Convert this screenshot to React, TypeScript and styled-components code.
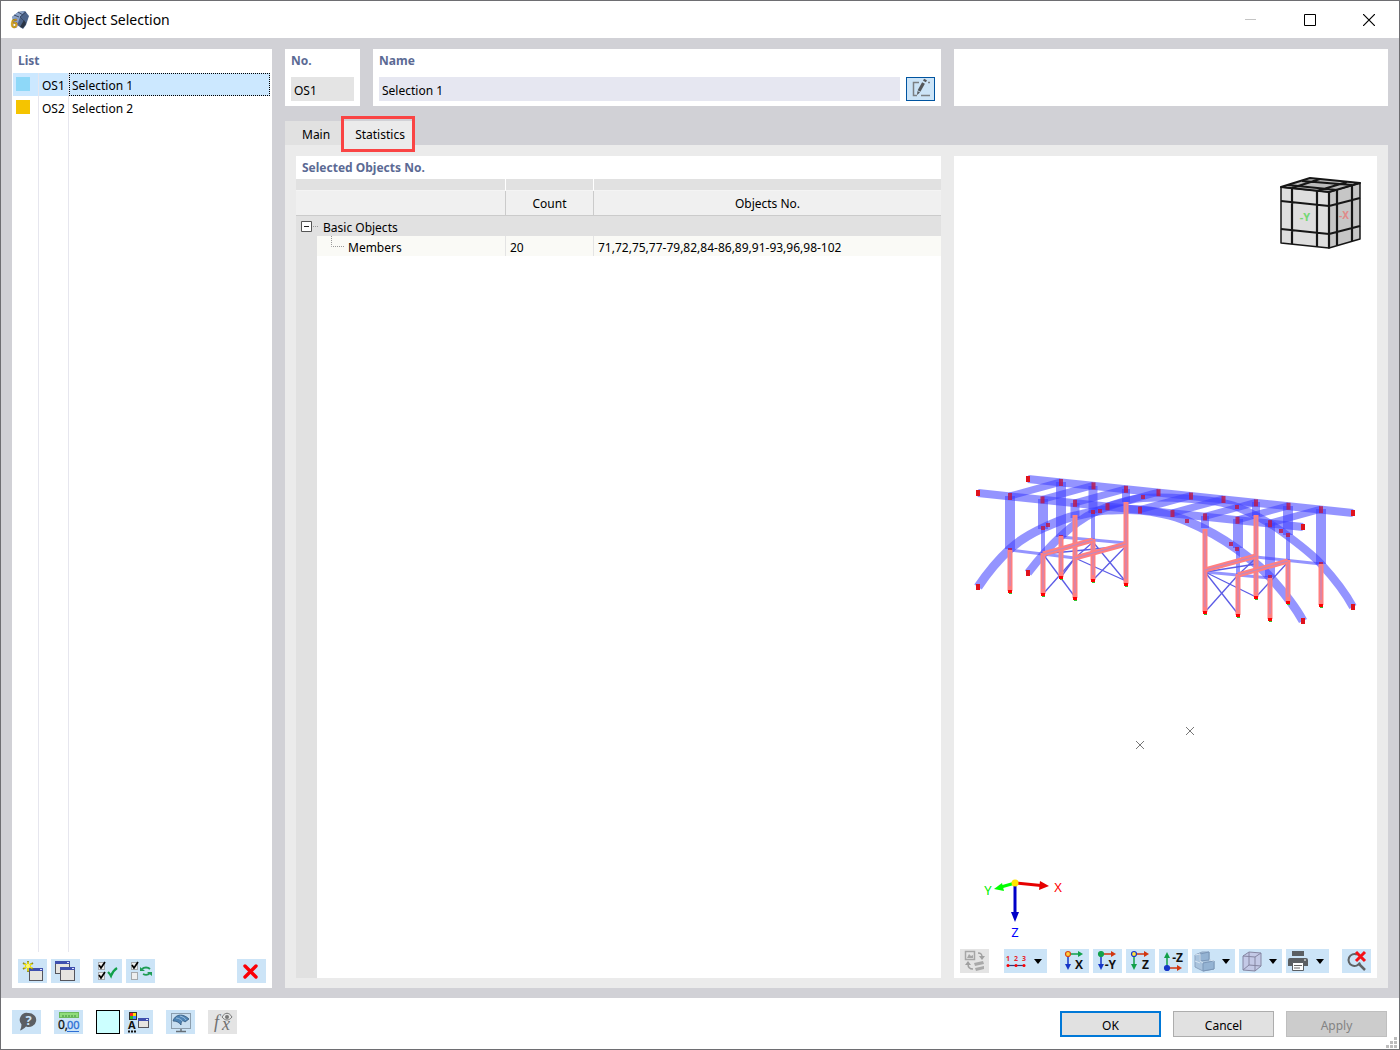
import React from "react";
import styled, { createGlobalStyle, css } from "styled-components";

const font = `"Noto Sans", "Open Sans", sans-serif`;

const GlobalStyle = createGlobalStyle`
  *, *::before, *::after { box-sizing: border-box; }
  body { margin: 0; font: 12px/16px ${font}; color: #000; background: #fff; }
  button, input { font: inherit; color: inherit; }
  button { padding: 0; border: 0; }
`;

/* ---------- window ---------- */

const Window = styled.div`
  display: flex;
  flex-direction: column;
  min-height: 100vh;
  border: 1px solid #6e6e72;
  background: #fff;
`;

const TitleBar = styled.header`
  display: flex;
  align-items: center;
  height: 37px;
  padding: 0 1px 0 8px;
`;

const WindowTitle = styled.h1`
  flex: 1;
  margin: 0 0 0 6px;
  font-size: 14px;
  line-height: 20px;
  font-weight: 400;
`;

const CaptionButton = styled.button`
  display: grid;
  place-items: center;
  width: 59px;
  height: 36px;
  background: transparent;
`;

const Body = styled.main`
  flex: 1;
  display: flex;
  gap: 13px;
  padding: 11px 11px 10px;
  background: #d1d1d6;
`;

const Footer = styled.footer`
  display: flex;
  align-items: flex-start;
  justify-content: space-between;
  height: 51px;
  padding: 12px 12px 0 11px;
  position: relative;
`;

const Grip = styled.svg`
  position: absolute;
  right: 2px;
  bottom: 1px;
`;

/* ---------- shared parts ---------- */

const Panel = styled.section`
  display: flex;
  flex-direction: column;
  background: #fff;
`;

const PanelTitle = styled.h2<{ $tight?: boolean }>`
  margin: 0;
  padding: 4px 6px ${(p) => (p.$tight ? 3 : 4)}px;
  font-size: 12px;
  line-height: 16px;
  font-weight: 700;
  color: #5b6a94;
`;

const Bar = styled.div<{ $gap?: number }>`
  display: flex;
  gap: ${(p) => p.$gap ?? 4}px;
`;

const Space = styled.span<{ $w?: number }>`
  ${(p) => (p.$w ? css`width: ${p.$w}px;` : css`flex: 1;`)}
`;

const IconButton = styled.button<{ $menu?: boolean; $framed?: boolean }>`
  display: flex;
  align-items: center;
  justify-content: center;
  width: ${(p) => (p.$menu ? 43 : 29)}px;
  height: 24px;
  background: #cce4f7;
  ${(p) => p.$framed && css`border: 1px solid #0054a0;`}
  &:disabled { background: #e4e4e4; }
`;

const ColorButton = styled.button`
  width: 24px;
  height: 24px;
  border: 1px solid #000;
  background: #ccffff;
`;

const PushButton = styled.button<{ $primary?: boolean }>`
  width: 101px;
  height: 26px;
  margin-top: 1px;
  padding-top: 3px;
  background: #e1e1e1;
  border: ${(p) => (p.$primary ? "2px solid #0078d7" : "1px solid #adadad")};
  &:disabled { background: #cccccc; border-color: #bfbfbf; color: #838383; }
`;

/* ---------- list ---------- */

const ListPanel = styled(Panel)`
  width: 260px;
  flex: none;
`;

const ListTable = styled.table`
  width: 257px;
  margin-left: 1px;
  border-collapse: separate;
  border-spacing: 0;
  table-layout: fixed;
`;

const ListRow = styled.tr<{ $selected?: boolean }>`
  height: 23px;
  td { padding: 3px 0 0 3px; background: ${(p) => (p.$selected ? "#cce8ff" : "#fff")}; }
  td:nth-child(1), td:nth-child(2) { border-right: 1px solid #e6e6ee; }
  td:nth-child(1) { padding-top: 1px; }
  td:nth-child(3) { border: 1px ${(p) => (p.$selected ? "dotted #000" : "solid transparent")}; padding-left: 2px; }
`;

const Swatch = styled.span<{ $color: string }>`
  display: block;
  width: 14px;
  height: 14px;
  margin-bottom: 3px;
  background: ${(p) => p.$color};
`;

const ListRest = styled.div`
  flex: 1;
  display: grid;
  grid-template-columns: 26px 30px 1fr;
  margin-left: 1px;
  span { border-right: 1px solid #e6e6ee; }
`;

const ListBar = styled(Bar)`
  padding: 7px 6px 5px;
`;

/* ---------- editor ---------- */

const Editor = styled.div`
  flex: 1;
  min-width: 0;
  display: flex;
  flex-direction: column;
`;

const Fields = styled.div`
  display: flex;
  gap: 13px;
  height: 57px;
`;

const NumberPanel = styled(Panel)` width: 75px; `;
const NamePanel = styled(Panel)` flex: 1; min-width: 0; `;
const EmptyPanel = styled(Panel)` width: 434px; `;

const FieldLabel = styled.label`
  padding: 4px 6px 8px;
  font-weight: 700;
  color: #5b6a94;
`;

const FieldRow = styled.div`
  display: flex;
  gap: 6px;
  padding: 0 6px;
`;

const Field = styled.input`
  flex: 1;
  min-width: 0;
  height: 24px;
  padding: 2px 3px 0;
  border: 0;
  border-radius: 0;
  background: #e6e7f1;
  &:read-only { background: #e4e4e4; }
`;

const Tabs = styled.div`
  display: flex;
  padding-top: 15px;
`;

const Tab = styled.button<{ $active?: boolean }>`
  position: relative;
  height: 24px;
  padding: 4px ${(p) => (p.$active ? "9px 0 13px" : "12px 0 17px")};
  background: ${(p) => (p.$active ? "#ebebeb" : "#e1e1e1")};
`;

const Marker = styled.span`
  position: absolute;
  inset: -5px -1px -7px -1px;
  border: 3px solid #fa4444;
`;

const Page = styled.div`
  flex: 1;
  display: flex;
  gap: 13px;
  padding: 11px 11px 10px;
  background: #ebebeb;
`;

const StatsPanel = styled(Panel)` flex: 1; min-width: 0; `;

const StatsTable = styled.table`
  width: 100%;
  table-layout: fixed;
  border-collapse: separate;
  border-spacing: 0;
  th { font-weight: 400; }
  td, th { padding: 0; text-align: left; }
`;

const StripRow = styled.tr`
  height: 12px;
  td { background: #e1e1e1; border-bottom: 1px solid #f4f4f4; }
  td + td { border-left: 1px solid #fff; }
`;

const HeadRow = styled.tr`
  height: 25px;
  && th { padding-top: 2px; background: #f0f0f0; text-align: center; border-bottom: 1px solid #cbcbcb; }
  th + th { border-left: 1px solid #cbcbcb; }
`;

const GroupRow = styled.tr`
  height: 20px;
  background: #e1e1e1;
`;

const ItemRow = styled.tr`
  height: 20px;
  background: #fafaf6;
  td:first-child { background: #e1e1e1; }
  && td:nth-child(n + 3) { padding: 3px 0 0 4px; border-left: 1px solid #e4e4e4; }
`;

const ToggleButton = styled.button`
  display: flex;
  margin-left: 5px;
  background: transparent;
`;

const Branch = styled.div<{ $indent?: boolean }>`
  display: flex;
  align-items: center;
  gap: 4px;
  height: 20px;
  padding-left: ${(p) => (p.$indent ? 14 : 0)}px;
  span { padding-top: 3px; }
`;

const StatsRest = styled.div`
  flex: 1;
  border-left: 21px solid #e1e1e1;
`;

const Viewer = styled(Panel)`
  width: 423px;
  flex: none;
`;

const Scene = styled.svg`
  flex: 1;
  width: 100%;
  min-height: 0;
  font-family: ${font};
`;

const ViewBar = styled(Bar)`
  padding: 0 6px 5px;
`;

/* ---------- icons ---------- */

const Svg = ({ children, w = 24 }: { children: React.ReactNode; w?: number }) => (
  <svg width={w} height="22" viewBox={`0 0 ${w} 22`} fill="none" aria-hidden="true">{children}</svg>
);

const MiniWindow = ({ x, y, w, h }: { x: number; y: number; w: number; h: number }) => (
  <g>
    <rect x={x + 0.5} y={y + 0.5} width={w - 1} height={h - 1} fill="#e6e4e0" stroke="#55555c" />
    <path d={`M${x} ${y + 1.5}h${w}`} stroke="#3f4fae" strokeWidth="3" />
    <path d={`M${x + w - 3} ${y + 1.5}h2`} stroke="#dfe4ff" />
  </g>
);

const NewIcon = () => (
  <Svg>
    <MiniWindow x={8} y={8} w={14} h={13} />
    <path d="M7 1v11M2 3l10 6M12 3L2 9" stroke="#8f8a1c" strokeWidth="1.800" />
    <path d="M7 2v9M3 4l8 4M11 4L3 8" stroke="#fff200" strokeWidth="1.200" />
    <circle cx="7" cy="6" r="2.200" fill="#fff76a" />
  </Svg>
);

const CopyIcon = () => (
  <Svg><MiniWindow x={1} y={1} w={15} h={13} /><MiniWindow x={6} y={7} w={15} h={14} /></Svg>
);

const CheckBoxGlyph = ({ y, on }: { y: number; on?: boolean }) => (
  <g>
    <rect x="2.500" y={y + 0.5} width="6" height="7" fill="#eee" stroke="#a5a9ad" />
    {on && <path d={`M3 ${y + 3}l2 3l4-6`} stroke="#000" strokeWidth="1.700" />}
  </g>
);

const CheckAllIcon = () => (
  <Svg><CheckBoxGlyph y={2} on /><CheckBoxGlyph y={12} on /><path d="M12 12c1 1 2 2 3 4c1-3 3-6 6-8" stroke="#12a04a" strokeWidth="2.200" /></Svg>
);

const InvertIcon = () => (
  <Svg>
    <CheckBoxGlyph y={2} on /><CheckBoxGlyph y={12} />
    <path d="M13 9c2-2 6-2 8 0M21 13c-2 2-5 2-7 1" stroke="#1f9d55" strokeWidth="1.800" />
    <path d="M11 7v4h5zM23 16v-4h-5z" fill="#1f9d55" />
  </Svg>
);

const DeleteIcon = () => (
  <Svg><path d="M5 6l11 11M16 6L5 17" stroke="#fb0007" strokeWidth="3.400" strokeLinecap="round" /></Svg>
);

const EditIcon = () => (
  <Svg>
    <path d="M10 4.500H4.500v13H8M12 17.500h9M19 4.500h2" stroke="#7b8084" strokeWidth="1.500" />
    <path d="M14.500 5L10 13" stroke="#55585b" strokeWidth="3.200" />
    <path d="M16.500 1.500l-1 2" stroke="#55585b" strokeWidth="3.200" />
    <path d="M8.500 13l-.5 4l3-2.500z" fill="#55585b" />
  </Svg>
);

const HelpIcon = () => (
  <Svg>
    <path d="M13 2a7.500 7 0 1 1-2 13.500c-2 2-4 3.500-6 4c1-2 1.500-4 1.500-6A7 7 0 0 1 13 2z" fill="#5c5f63" />
    <text x="13.500" y="14" textAnchor="middle" fontSize="13" fontWeight="700" fill="#cce4f7">?</text>
  </Svg>
);

const UnitsIcon = () => (
  <Svg>
    <rect x="2.500" y="1.500" width="19" height="5" fill="#8fdc7c" stroke="#6cba5e" />
    <path d="M6 4v2M9 4v2M12 4v2M15 4v2M18 4v2" stroke="#3f8a3a" />
    <text x="1" y="18" fontSize="12" fill="#111" stroke="#111" strokeWidth=".3">0,</text>
    <text x="10" y="18" fontSize="11" fill="#2d6fd6" stroke="#2d6fd6" strokeWidth=".3">00</text>
    <path d="M10 20.500h12" stroke="#2d6fd6" />
  </Svg>
);

const DisplayIcon = () => (
  <Svg>
    <rect x="2" y="1" width="8" height="8" fill="#333" />
    <rect x="3" y="2" width="3" height="3" fill="#f22" /><rect x="6" y="2" width="3" height="3" fill="#fd0" />
    <rect x="3" y="5" width="3" height="3" fill="#2b2" /><rect x="6" y="5" width="3" height="3" fill="#48f" />
    <text x="1" y="18" fontSize="11" fontWeight="700" fill="#111">A</text>
    <path d="M1 20.500h9" stroke="#111" strokeWidth="2" strokeDasharray="2 1" />
    <MiniWindow x={11} y={7} w={11} h={10} />
  </Svg>
);

const ScreenIcon = () => (
  <Svg>
    <rect x="2.500" y="2.500" width="19" height="15" fill="#c8def0" stroke="#8b9dad" />
    <path d="M12 18v3M7 20.500h10" stroke="#666f78" strokeWidth="1.500" />
    <path d="M4 10c2-7 10-8 16-2l-4 3c-2-2-4-1-4 3c-2-3-5-4-8-4z" fill="#4f84b5" stroke="#34597c" strokeWidth=".8" />
    <path d="M7 7c3 0 6 2 7 4M11 5c3 1 5 2 6 4" stroke="#a9cbe8" strokeWidth=".8" />
  </Svg>
);

const FormulaIcon = () => (
  <Svg>
    <text x="3" y="17" fontSize="18" fontStyle="italic" fontFamily="Liberation Serif, serif" fill="#707070">f</text>
    <text x="11" y="19" fontSize="18" fontStyle="italic" fontFamily="Liberation Serif, serif" fill="#707070">x</text>
    <path d="M11 6c3-5 7-5 10 0c-3 4-7 4-10 0z" stroke="#777" /><circle cx="16" cy="6" r="2" fill="#777" />
  </Svg>
);

const SyncIcon = () => (
  <Svg>
    <rect x="2.500" y="1.500" width="9" height="8" stroke="#a6a6a6" strokeWidth="1.500" /><path d="M4 8l2-4l2 2l2-1v3z" fill="#a6a6a6" />
    <path d="M15 3c4 0 4 2 4 4M10 19c-4 0-5-2-5-5" stroke="#a0a0a0" strokeWidth="1.500" />
    <path d="M16 6h6l-3 4zM2 15h6l-3-4z" fill="#a0a0a0" />
    <path d="M11 13l9-2l1 3l-9 2zM12 18l9-2v3l-8 2z" fill="#a9a9a9" />
  </Svg>
);

const NumberingIcon = () => (
  <Svg>
    <g fontSize="7" fontWeight="700" fill="#e8262d" textAnchor="middle"><text x="2" y="11">1</text><text x="10" y="11">2</text><text x="18" y="11">3</text></g>
    <path d="M2 15.500h16" stroke="#333a78" strokeWidth="1.200" />
    <circle cx="2" cy="15.500" r="1.500" fill="#f00" /><circle cx="10" cy="15.500" r="1.500" fill="#f00" /><circle cx="18" cy="15.500" r="1.500" fill="#f00" />
  </Svg>
);

type AxisProps = { label: string; dot: string; ring: string; side: string; vert: string; up?: boolean };
const AxisIcon = ({ label, dot, ring, side, vert, up }: AxisProps) => (
  <Svg>
    <path d={up ? "M5 18h12" : "M5 4h12"} stroke={side} strokeWidth="1.500" />
    <path d={up ? "M15 15l5 3l-5 3z" : "M15 1l5 3l-5 3z"} fill={side} />
    <path d={up ? "M5 18V6" : "M5 4v12"} stroke={vert} strokeWidth="1.500" />
    <path d={up ? "M2 8l3-6l3 6z" : "M2 14l3 6l3-6z"} fill={vert} />
    <circle cx="5" cy={up ? 18 : 4} r="2.500" fill={dot} stroke={ring} strokeWidth="1.200" />
    <text x={up ? 21 : 20} y={up ? 12 : 19} textAnchor="end" fontSize="12" fontWeight="700" fontFamily="Open Sans, sans-serif" fill="#111">{label}</text>
  </Svg>
);

const Caret = () => (
  <svg width="16" height="22" viewBox="0 0 16 22" aria-hidden="true"><path d="M4 9h8l-4 5z" fill="#000" /></svg>
);

const StepsIcon = () => (
  <Svg>
    <path d="M1 5l7-3h7v8l5 1v8l-11 2l-8-4z" fill="#a9c3dd" stroke="#8ba3c0" />
    <path d="M6 4l9-2v8l-9 1zM9 13l11-2v8l-11 2z" fill="#94b3d3" stroke="#7b97b8" />
    <path d="M1 5l5-1v7l3 2M1 11l5 2M15 10l5 1" stroke="#d6e4f1" />
  </Svg>
);

const BoxIcon = () => (
  <Svg>
    <path d="M2 6l6-4l12 1v13l-6 5l-12-1z" fill="#c3c9e6" stroke="#8586a2" />
    <path d="M2 6l12 1v14M14 7l6-4M8 2v13l12 1M8 15l-6 5" stroke="#8586a2" />
  </Svg>
);

const PrinterIcon = () => (
  <Svg>
    <path d="M4 1h12v5H4z" fill="#5b5f63" />
    <path d="M2 8h16a2 2 0 0 1 2 2v6H0v-6a2 2 0 0 1 2-2z" fill="#5b5f63" />
    <path d="M4.500 12.500h11v8h-11z" fill="#fff" stroke="#5b5f63" />
    <path d="M6 15.500h8M6 18h6" stroke="#666" /><path d="M16 10h2" stroke="#fff" />
  </Svg>
);

const ResetViewIcon = () => (
  <Svg>
    <path d="M12 4.500a6 6 0 1 0 3 8" stroke="#5f6264" strokeWidth="2" />
    <path d="M14 14l6 6" stroke="#5f6264" strokeWidth="2.500" />
    <path d="M11 2l9 9M20 2l-9 9" stroke="#f51017" strokeWidth="3" />
  </Svg>
);

const AppIcon = () => (
  <svg width="20" height="20" viewBox="0 0 20 20" aria-hidden="true">
    <path d="M3 7l6-5l7-1l4 5l-3 9l-3 4l-6-4z" fill="#4c648a" />
    <path d="M3 7l6-5l7-1l-5 6l-2 6l-5-1z" fill="#8ba3c8" />
    <path d="M5 5l5 2M9 2l5 3M11 7l6-5M11 7l6 6" stroke="#3a4a66" />
    <path d="M15 10l2 4l-3 4l-3-1z" fill="#2a3444" />
    <text x="2" y="18" fontSize="12" fontWeight="700" fontFamily="Open Sans, sans-serif" fill="#dfae1d" stroke="#7d6010" strokeWidth=".4">6</text>
  </svg>
);

/* ---------- bridge model ---------- */

type Seg = [number, number, number, number];
const bays = [0, 1, 2, 3, 4, 5, 6, 7, 8];

const posts: Seg[] = [
  [50, 36, 89, 10], [83, 39, 69, 10], [83, 69, 94, 4], [101, 22, 77, 10], [115, 43, 58, 9],
  [133, 26, 53, 9], [133, 53, 80, 4], [166, 29, 42, 8], [245, 56, 68, 8], [278, 59, 88, 10],
  [278, 88, 114, 4], [296, 42, 56, 8], [310, 63, 117, 10], [328, 46, 75, 10], [328, 75, 101, 4], [361, 49, 104, 10],
];
const selectedPosts: [number, number, number][] = [
  [50, 90, 131], [101, 76, 117], [133, 79, 120], [83, 93, 134], [166, 42, 124], [115, 55, 138],
  [245, 69, 152], [296, 55, 137], [278, 114, 155], [310, 118, 159], [328, 100, 142], [361, 104, 145],
];
const selectedBeams: Seg[] = [[83, 94, 133, 80], [115, 98, 166, 84], [245, 110, 296, 96], [278, 115, 328, 101]];
const ties: Seg[] = [[50, 90, 115, 98], [101, 77, 166, 83], [245, 112, 310, 118], [296, 97, 361, 104]];
const braces: Seg[] = [
  [83, 94, 115, 137], [115, 98, 83, 134], [133, 82, 166, 122], [166, 86, 133, 120], [115, 98, 166, 121],
  [115, 98, 133, 82], [83, 94, 166, 86], [101, 117, 115, 98],
  [245, 112, 278, 154], [278, 115, 245, 152], [245, 112, 296, 137], [328, 102, 296, 137],
  [245, 112, 296, 104], [278, 115, 296, 98],
];
const archNodes: [number, number][] = [
  [83, 68], [88, 65], [140, 51], [133, 52], [183, 37], [227, 61], [271, 84], [277, 89], [277, 47], [321, 71], [328, 75], [310, 117], [361, 104], [50, 90], [101, 77],
];
const ends: [number, number][] = [[18, 33], [68, 19], [343, 67], [393, 53], [18, 127], [68, 113], [343, 161], [393, 147]];

const line = ([x1, y1, x2, y2]: Seg) => `M${x1} ${y1}L${x2} ${y2}`;
const farArch = "M68 113C78 100 88 88 100 77S122 58 133 53S165 39 183 38S255 38 277 47S310 63 321 71S350 92 361 104S385 132 393 147";
const nearArch = "M18 127C28 112 38 100 50 89S72 73 83 68S105 58 115 56S138 50 148 50S168 49 180 50S213 55 227 61S262 78 277 89S300 106 310 117S335 146 343 161";

const Bridge = () => (
  <g transform="translate(6 304)" fill="none">
    <g stroke="#3c3cff" strokeOpacity=".55">
      <path d={farArch} strokeWidth="8" />
      <path d="M68 19L393 53" strokeWidth="8" />
      {bays.map((k) => (
        <path key={k} d={line([50 + 32.5 * k, 36 + 3.4 * k, 101 + 32.5 * k, 22 + 3.4 * k])} strokeWidth="7" />
      ))}
      {posts.map(([x, y1, y2, w], i) => <path key={i} d={line([x, y1, x, y2])} strokeWidth={w} />)}
      <path d={nearArch} strokeWidth="9" />
      <path d="M18 33L343 67" strokeWidth="8" />
      {ties.map((t, i) => <path key={i} d={line(t)} strokeWidth="3" />)}
    </g>
    <g stroke="#5b5be6" strokeWidth="1.300">{braces.map((b, i) => <path key={i} d={line(b)} />)}</g>
    <g fill="#b81c50" fillOpacity=".85">
      {bays.map((k) => <rect key={k} x={48 + 32.5 * k} y={33 + 3.4 * k} width="4" height="7" />)}
      {bays.map((k) => <rect key={k} x={99 + 32.5 * k} y={19 + 3.4 * k} width="4" height="7" />)}
      {archNodes.map(([x, y], i) => <rect key={i} x={x - 2} y={y - 2} width="4" height="4" />)}
    </g>
    {selectedPosts.map(([x, y1, y2], i) => (
      <g key={i}>
        <path d={line([x, y1, x, y2])} stroke="#ff7f80" strokeWidth="5" />
        <path d={line([x, y1 + 2, x, y2 - 5])} stroke="#b989c8" />
        <rect x={x - 2} y={y2 - 1} width="4" height="3" fill="#f00" />
        <rect x={x - 1} y={y2 + 2} width="3" height="1" fill="#2fc32f" />
      </g>
    ))}
    {selectedBeams.map((b, i) => (
      <g key={i}>
        <path d={line(b)} stroke="#ff7f80" strokeWidth="5" />
        <path d={line(b)} stroke="#b989c8" />
      </g>
    ))}
    {ends.map(([x, y], i) => <rect key={i} x={x - 2} y={y - 3} width="4" height="6" fill="#e0121c" />)}
  </g>
);

const ViewCube = () => (
  <g transform="translate(325 20)" stroke="#161616" strokeLinejoin="round">
    <path d="M2 11L50 16V72L2 67z" fill="#dedede" strokeWidth="1.500" />
    <path d="M50 16L81 7V63L50 72z" fill="#c6c6c6" strokeWidth="1.500" />
    <path d="M2 11L31 2L81 7L50 16z" fill="#bcbcbc" strokeWidth="2" />
    <path d="M2 25L50 30L81 22M2 53L50 58L81 50M13 12V68M38 15V71M58 14V69M73 10V65M9 9L58 14M23 5L73 9M13 12L41 3M38 15L68 6M50 16V72" fill="none" strokeWidth="2.200" />
    <text x="26" y="45" textAnchor="middle" fontSize="11" fontWeight="700" fill="#74d874" stroke="none">-Y</text>
    <text x="65" y="43" textAnchor="middle" fontSize="10" fontWeight="700" fill="#e08a8a" stroke="none">-X</text>
  </g>
);

const Axes = () => (
  <g transform="translate(61 727)">
    <path d="M0 0L26 2.500" stroke="#e60000" strokeWidth="3" /><path d="M25-2L34 3L24 7z" fill="#e60000" />
    <path d="M0 0V32" stroke="#0000c8" strokeWidth="3" /><path d="M-4 29H4L0 39z" fill="#0000c8" />
    <path d="M0 0L-14 4" stroke="#0f0" strokeWidth="3" /><path d="M-13 0L-21 6L-11 8z" fill="#0f0" />
    <circle r="3.500" fill="#ffe600" />
    <g fontSize="13" textAnchor="middle">
      <text x="43" y="9" fill="#f00">X</text><text x="-27" y="12" fill="#0e0">Y</text><text x="0" y="54" fill="#00f">Z</text>
    </g>
  </g>
);

/* ---------- app ---------- */

const selections = [
  { no: "OS1", name: "Selection 1", color: "#8ed8f8" },
  { no: "OS2", name: "Selection 2", color: "#f5c400" },
];

export default function App() {
  return (
    <>
      <GlobalStyle />
      <Window>
        <TitleBar>
          <AppIcon />
          <WindowTitle>Edit Object Selection</WindowTitle>
          <CaptionButton aria-label="Minimize" disabled><svg width="12" height="12"><path d="M0 5.500h11" stroke="#c4c4c4" /></svg></CaptionButton>
          <CaptionButton aria-label="Maximize"><svg width="12" height="12"><path d="M.5.5h11v11H.5z" fill="none" stroke="#000" /></svg></CaptionButton>
          <CaptionButton aria-label="Close"><svg width="12" height="12"><path d="M0 0l12 12M12 0L0 12" stroke="#000" strokeWidth="1.200" /></svg></CaptionButton>
        </TitleBar>

        <Body>
          <ListPanel>
            <PanelTitle>List</PanelTitle>
            <ListTable aria-label="List">
              <colgroup><col width="26" /><col width="30" /><col /></colgroup>
              <tbody>
                {selections.map((s, i) => (
                  <ListRow key={s.no} $selected={i === 0}>
                    <td><Swatch $color={s.color} /></td><td>{s.no}</td><td>{s.name}</td>
                  </ListRow>
                ))}
              </tbody>
            </ListTable>
            <ListRest><span /><span /></ListRest>
            <ListBar>
              <IconButton aria-label="New"><NewIcon /></IconButton>
              <IconButton aria-label="Copy"><CopyIcon /></IconButton>
              <Space $w={5} />
              <IconButton aria-label="Select all"><CheckAllIcon /></IconButton>
              <IconButton aria-label="Invert selection"><InvertIcon /></IconButton>
              <Space />
              <IconButton aria-label="Delete"><DeleteIcon /></IconButton>
            </ListBar>
          </ListPanel>

          <Editor>
            <Fields>
              <NumberPanel>
                <FieldLabel htmlFor="no">No.</FieldLabel>
                <FieldRow><Field id="no" readOnly value="OS1" /></FieldRow>
              </NumberPanel>
              <NamePanel>
                <FieldLabel htmlFor="name">Name</FieldLabel>
                <FieldRow>
                  <Field id="name" defaultValue="Selection 1" />
                  <IconButton $framed aria-label="Edit name"><EditIcon /></IconButton>
                </FieldRow>
              </NamePanel>
              <EmptyPanel />
            </Fields>

            <Tabs role="tablist">
              <Tab role="tab" aria-selected={false}>Main</Tab>
              <Tab role="tab" aria-selected $active>Statistics<Marker /></Tab>
            </Tabs>

            <Page role="tabpanel">
              <StatsPanel>
                <PanelTitle $tight>Selected Objects No.</PanelTitle>
                <StatsTable>
                  <colgroup><col width="21" /><col width="188" /><col width="88" /><col /></colgroup>
                  <thead>
                    <StripRow><td colSpan={2} /><td /><td /></StripRow>
                    <HeadRow><th colSpan={2} /><th>Count</th><th>Objects No.</th></HeadRow>
                  </thead>
                  <tbody>
                    <GroupRow>
                      <td>
                        <ToggleButton aria-label="Collapse Basic Objects">
                          <svg width="16" height="11"><path d="M.5.5h10v10H.5z" fill="#fff" stroke="#555" /><path d="M3 5.500h5" stroke="#222" /><path d="M12 5.500h4" stroke="#999" strokeDasharray="1 1" /></svg>
                        </ToggleButton>
                      </td>
                      <th colSpan={3} scope="rowgroup">
                        <Branch><svg width="2" height="11"><path d="M0 5.500h2" stroke="#999" strokeDasharray="1 1" /></svg><span>Basic Objects</span></Branch>
                      </th>
                    </GroupRow>
                    <ItemRow>
                      <td />
                      <th scope="row">
                        <Branch $indent><svg width="13" height="20"><path d="M.5 0v10.500H13" fill="none" stroke="#999" strokeDasharray="1 1" /></svg><span>Members</span></Branch>
                      </th>
                      <td>20</td>
                      <td>71,72,75,77-79,82,84-86,89,91-93,96,98-102</td>
                    </ItemRow>
                  </tbody>
                </StatsTable>
                <StatsRest />
              </StatsPanel>

              <Viewer>
                <Scene viewBox="0 0 423 793" role="img" aria-label="Bridge model">
                  <ViewCube />
                  <Bridge />
                  <path d="M182 585l8 8M190 585l-8 8M232 571l8 8M240 571l-8 8" stroke="#777" />
                  <Axes />
                </Scene>
                <ViewBar>
                  <IconButton disabled aria-label="Synchronize"><SyncIcon /></IconButton>
                  <Space $w={7} />
                  <IconButton $menu aria-label="Numbering"><NumberingIcon /><Caret /></IconButton>
                  <Space $w={5} />
                  <IconButton aria-label="View in X"><AxisIcon label="X" dot="#ffd23c" ring="#d8421a" side="#12a04a" vert="#1636c8" /></IconButton>
                  <IconButton aria-label="View in -Y"><AxisIcon label="-Y" dot="#12a04a" ring="#12a04a" side="#d2350f" vert="#1636c8" /></IconButton>
                  <IconButton aria-label="View in Z"><AxisIcon label="Z" dot="#ffe23c" ring="#1636c8" side="#d2350f" vert="#12a04a" /></IconButton>
                  <IconButton aria-label="View in -Z"><AxisIcon up label="-Z" dot="#1636c8" ring="#1636c8" side="#d2350f" vert="#12a04a" /></IconButton>
                  <IconButton $menu aria-label="Display style"><StepsIcon /><Caret /></IconButton>
                  <IconButton $menu aria-label="Box display"><BoxIcon /><Caret /></IconButton>
                  <IconButton $menu aria-label="Print"><PrinterIcon /><Caret /></IconButton>
                  <Space />
                  <IconButton aria-label="Reset view"><ResetViewIcon /></IconButton>
                </ViewBar>
              </Viewer>
            </Page>
          </Editor>
        </Body>

        <Footer>
          <Bar>
            <IconButton aria-label="Help"><HelpIcon /></IconButton>
            <Space $w={5} />
            <IconButton aria-label="Units"><UnitsIcon /></IconButton>
            <Space $w={5} />
            <ColorButton aria-label="Color" />
            <IconButton aria-label="Display properties"><DisplayIcon /></IconButton>
            <Space $w={5} />
            <IconButton aria-label="View"><ScreenIcon /></IconButton>
            <Space $w={5} />
            <IconButton disabled aria-label="Formula"><FormulaIcon /></IconButton>
          </Bar>
          <Bar $gap={12}>
            <PushButton $primary>OK</PushButton>
            <PushButton>Cancel</PushButton>
            <PushButton disabled>Apply</PushButton>
          </Bar>
          <Grip width="11" height="11" aria-hidden="true">
            <path d="M8 0h3v3H8zM4 4h3v3H4zM8 4h3v3H8zM0 8h3v3H0zM4 8h3v3H4zM8 8h3v3H8z" fill="#bdbdbd" />
          </Grip>
        </Footer>
      </Window>
    </>
  );
}
